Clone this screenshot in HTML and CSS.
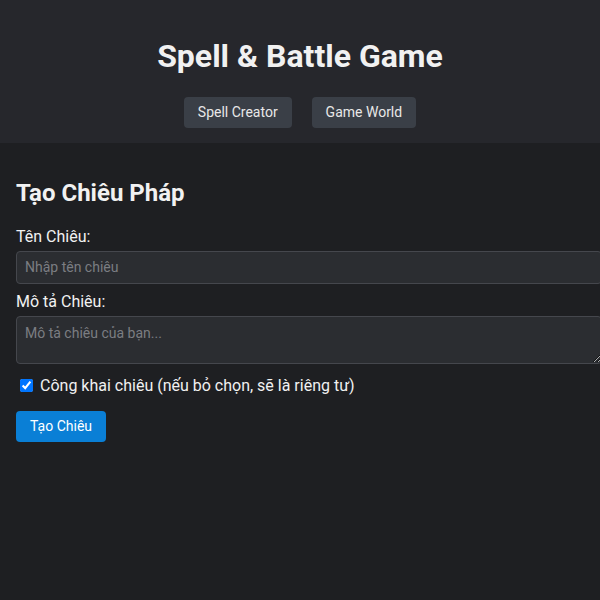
FILE: index.html
```html
<!DOCTYPE html>
<html lang="vi">
<head>
    <meta charset="UTF-8">
    <title>Spell &amp; Battle Game</title>
    <link rel="stylesheet" href="styles.css">
</head>
<body>
    <header class="top-bar">
        <h1>Spell &amp; Battle Game</h1>
        <nav class="nav">
            <button class="nav-btn">Spell Creator</button>
            <button class="nav-btn">Game World</button>
        </nav>
    </header>

    <main class="content">
        <!-- Form tạo chiêu -->
        <section id="spellCreator">
            <h2>Tạo Chiêu Pháp</h2>
            <label for="spellName">Tên Chiêu:</label>
            <input type="text" id="spellName" placeholder="Nhập tên chiêu">
            <label for="spellDesc">Mô tả Chiêu:</label>
            <textarea id="spellDesc" placeholder="Mô tả chiêu của bạn..."></textarea>
            <div class="check-row">
                <input type="checkbox" id="isPublic" checked>
                <label for="isPublic">Công khai chiêu (nếu bỏ chọn, sẽ là riêng tư)</label>
            </div>
            <button class="primary-btn">Tạo Chiêu</button>
        </section>
    </main>
</body>
</html>
```

FILE: styles.css
```css
body {
    margin: 0;
    background: #1e1f22;
    font-family: Roboto, "Noto Sans", sans-serif;
    color: #f1f1f1;
}
.top-bar {
    background: #26272c;
    text-align: center;
    padding: 20px 0 15px;
}
.top-bar h1 {
    margin: 17px 0 22px;
    font-size: 32px;
}
.nav-btn {
    background: #3a3f47;
    color: #e8e8e8;
    border: none;
    border-radius: 4px;
    padding: 7px 14px;
    line-height: 17px;
    margin: 0 8px;
    font-family: inherit;
    font-size: 14px;
    cursor: pointer;
}
.content {
    padding: 16px;
}
.content h2 {
    font-size: 24px;
    margin: 20px 0 20px;
}
.content label {
    display: block;
    font-size: 16px;
    margin-bottom: 5px;
}
input[type="text"], textarea {
    width: 100%;
    padding: 7px 8px;
    line-height: 17px;
    margin-bottom: 8px;
    background: #2b2d31;
    color: #eee;
    border: 1px solid #45474d;
    border-radius: 4px;
    font-family: inherit;
    font-size: 14px;
}
textarea {
    height: 31px;
    padding-top: 8px;
    margin-bottom: 7px;
}
::placeholder {
    color: #7b7d82;
}
.check-row {
    display: flex;
    align-items: center;
    margin: 1px 0 16px;
}
.check-row input {
    margin: 0 7px 0 4px;
    width: 13px;
    height: 13px;
}
.check-row label {
    display: inline;
    margin: 0;
}
.primary-btn {
    background: #0a7fd6;
    color: #fff;
    border: none;
    border-radius: 4px;
    padding: 7px 14px;
    line-height: 17px;
    font-family: inherit;
    font-size: 14px;
    cursor: pointer;
}
```
